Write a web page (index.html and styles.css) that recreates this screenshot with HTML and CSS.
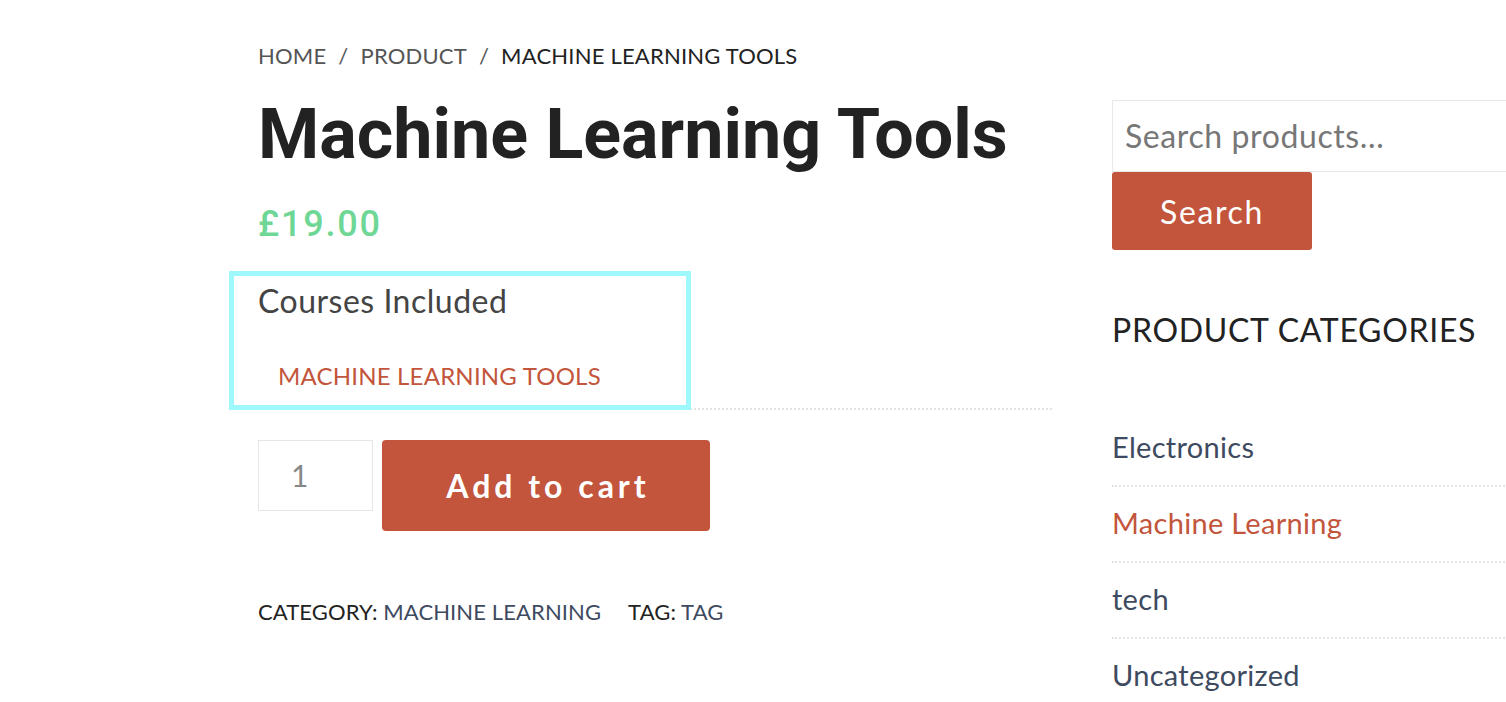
FILE: index.html
```html
<!DOCTYPE html>
<html lang="en">
<head>
<meta charset="utf-8">
<title>Machine Learning Tools</title>
<link rel="stylesheet" href="styles.css">
</head>
<body>
<div class="page">
  <main class="product">
    <nav class="crumbs">
      <a href="#">Home</a><span class="sep">/</span><a href="#">Product</a><span class="sep">/</span><span class="current">Machine Learning Tools</span>
    </nav>
    <h1 class="title">Machine Learning Tools</h1>
    <p class="price">£19.00</p>
    <div class="courses-wrap">
      <div class="courses">
        <h3 class="courses-title">Courses Included</h3>
        <a class="course-link" href="#">Machine Learning Tools</a>
      </div>
    </div>
    <form class="cart">
      <div class="qty">1</div>
      <button type="button" class="add">Add to cart</button>
    </form>
    <div class="meta">
      <span class="meta-item">Category: <a href="#">Machine Learning</a></span>
      <span class="meta-item">Tag: <a href="#">Tag</a></span>
    </div>
  </main>
  <aside class="sidebar">
    <div class="search">
      <div class="search-input">Search products…</div>
      <button type="button" class="search-btn">Search</button>
    </div>
    <h2 class="cat-title">Product Categories</h2>
    <ul class="cats">
      <li><a href="#">Electronics</a></li>
      <li class="active"><a href="#">Machine Learning</a></li>
      <li><a href="#">tech</a></li>
      <li><a href="#">Uncategorized</a></li>
    </ul>
  </aside>
</div>
</body>
</html>
```
FILE: styles.css
```css
html, body {
  margin: 0;
  padding: 0;
  background: #fff;
  overflow: hidden;
}
body {
  font-family: "Lato", "Noto Sans", sans-serif;
  color: #222;
}
a { text-decoration: none; }

.page {
  display: flex;
  gap: 60px;
  padding: 41px 0 0 258px;
  width: 1400px;
}
.product {
  width: 794px;
  flex: none;
}
.crumbs {
  font-size: 22px;
  line-height: 30px;
  letter-spacing: 0.2px;
  text-transform: uppercase;
  color: #555;
}
.crumbs a { color: #555; }
.crumbs .sep { margin: 0 12px; }
.crumbs .current { color: #222; }

.title {
  font-family: "Roboto", sans-serif;
  font-weight: 700;
  font-size: 70px;
  line-height: 77px;
  margin: 25px 0 0;
  color: #222;
}
.price {
  font-family: "Roboto", sans-serif;
  font-weight: 500;
  font-size: 36px;
  line-height: 43px;
  letter-spacing: 1.8px;
  color: #6fd796;
  margin: 30px 0 0;
}

.courses-wrap {
  margin-top: 25px;
  border-bottom: 2px dotted #e4e4e4;
}
.courses {
  position: relative;
  margin: 0 0 -2px -29px;
  width: 428px;
  border: 5px solid #9ef8fc;
  padding: 7px 0 16px 24px;
}
.courses-title {
  font-weight: 400;
  font-size: 32px;
  line-height: 36px;
  letter-spacing: 0.5px;
  color: #444;
  margin: 0;
}
.course-link {
  display: block;
  margin: 43px 0 0 20px;
  font-size: 24px;
  line-height: 27px;
  letter-spacing: 0.2px;
  text-transform: uppercase;
  color: #c2553b;
}

.cart {
  display: flex;
  align-items: flex-start;
  gap: 9px;
  margin: 30px 0 0;
}
.qty {
  width: 113px;
  height: 69px;
  border: 1px solid #e6e6e6;
  font-size: 30px;
  line-height: 69px;
  color: #888;
  text-indent: 32px;
}
.add {
  width: 328px;
  height: 91px;
  border: 0;
  border-radius: 4px;
  background: #c2553b;
  color: #fff;
  font-family: "Lato", sans-serif;
  font-weight: 700;
  font-size: 32px;
  letter-spacing: 4px;
  padding: 0 0 0 4px;
}

.meta {
  margin-top: 66px;
  font-size: 22px;
  line-height: 30px;
  letter-spacing: 0.1px;
  text-transform: uppercase;
  color: #222;
  display: flex;
  gap: 27px;
}
.meta a { color: #3e4a5f; }

.sidebar {
  width: 440px;
  flex: none;
  padding-top: 59px;
}
.search-input {
  height: 70px;
  border: 1px solid #e8e8e8;
  font-size: 32px;
  line-height: 70px;
  letter-spacing: 0.6px;
  color: #777;
  padding-left: 12px;
}
.search-btn {
  display: block;
  width: 200px;
  height: 78px;
  border: 0;
  border-radius: 3px;
  background: #c2553b;
  color: #fff;
  font-family: "Lato", sans-serif;
  font-size: 32px;
  letter-spacing: 1.6px;
  padding: 0;
}
.cat-title {
  font-weight: 400;
  font-size: 32px;
  line-height: 40px;
  letter-spacing: 0.7px;
  text-transform: uppercase;
  color: #222;
  margin: 60px 0 0;
}
.cats {
  list-style: none;
  margin: 61px 0 0;
  padding: 0;
}
.cats li {
  font-size: 29px;
  line-height: 36px;
  letter-spacing: 0.3px;
  padding: 18px 0 20px;
  border-bottom: 2px dotted #e4e4e4;
}
.cats li a { color: #3e4a5f; }
.cats li.active a { color: #c2553b; }
```
